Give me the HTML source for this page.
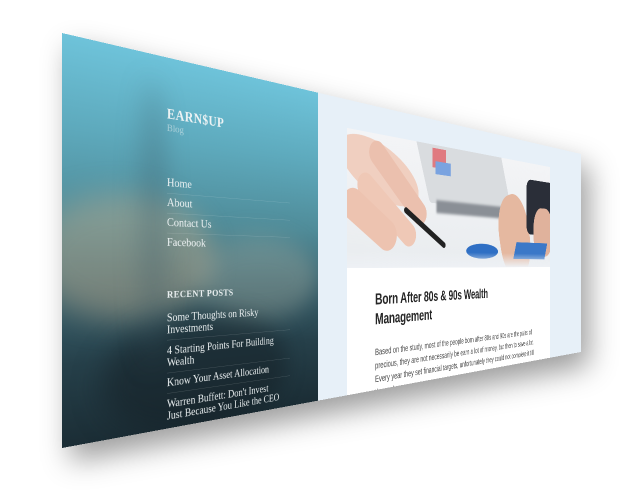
<!DOCTYPE html>
<html><head><meta charset="utf-8"><style>
html,body{margin:0;padding:0;width:640px;height:490px;overflow:hidden;background:#fff;}
#wrap{position:absolute;left:0;top:0;width:640px;height:490px;filter:drop-shadow(8px 14px 14px rgba(0,0,0,.38));}
#pg{position:absolute;left:0;top:0;width:2160px;height:800px;transform-origin:0 0;
transform:matrix3d(0.53507,0.13416,0,0.00050739, 0,0.51875,0,0, 0,0,1,0, 62,33,0,1);overflow:hidden;background:#e7f0f8;}
#side{position:absolute;left:0;top:0;width:685px;height:800px;overflow:hidden;
background:linear-gradient(180deg,#6ec3da 0%,#5eaabd 22%,#4f8b98 45%,#3b6470 62%,#26404a 80%,#1b2d35 100%);}
.blob{position:absolute;border-radius:50%;filter:blur(30px);}
.s{position:absolute;font-family:"Liberation Serif",serif;color:#eef3f4;white-space:nowrap;}
.sep{position:absolute;left:233px;width:355px;height:1px;background:rgba(255,255,255,.18);}
#card{position:absolute;left:794px;top:77px;width:1111px;height:760px;background:#fff;overflow:hidden;}
#img{position:absolute;left:0;top:0;width:1111px;height:379px;background:linear-gradient(180deg,#f3f4f6,#e9ecef);overflow:hidden;}
.t{position:absolute;font-family:"Liberation Sans",sans-serif;color:#222;white-space:nowrap;}
</style></head><body>
<div id="wrap"><div id="pg">
 <div id="side">
  <div class="blob" style="left:-60px;top:300px;width:420px;height:260px;background:rgba(190,170,140,.45)"></div>
  <div class="blob" style="left:300px;top:380px;width:380px;height:200px;background:rgba(170,175,160,.35)"></div>
  <div class="blob" style="left:80px;top:560px;width:500px;height:260px;background:rgba(20,30,35,.5)"></div>
  <div class="blob" style="left:170px;top:60px;width:60px;height:600px;background:rgba(60,90,100,.35)"></div>
  <div class="s" style="left:233px;top:103px;font-size:31px;font-weight:bold;letter-spacing:1px">EARN$UP</div>
  <div class="s" style="left:233px;top:138px;font-size:22px;opacity:.55">Blog</div>
  <div class="s" style="left:233px;top:254px;font-size:26px">Home</div>
  <div class="sep" style="top:292px"></div>
  <div class="s" style="left:233px;top:297px;font-size:26px">About</div>
  <div class="sep" style="top:335px"></div>
  <div class="s" style="left:233px;top:340px;font-size:26px">Contact Us</div>
  <div class="sep" style="top:378px"></div>
  <div class="s" style="left:233px;top:383px;font-size:26px">Facebook</div>
  <div class="s" style="left:233px;top:498px;font-size:22px;font-weight:bold;letter-spacing:1px">RECENT POSTS</div>
  <div class="s" style="left:233px;top:549px;font-size:25px;line-height:26px">Some Thoughts on Risky<br>Investments</div>
  <div class="sep" style="top:609px"></div>
  <div class="s" style="left:233px;top:620px;font-size:25px;line-height:26px">4 Starting Points For Building<br>Wealth</div>
  <div class="sep" style="top:680px"></div>
  <div class="s" style="left:233px;top:689px;font-size:25px;line-height:26px">Know Your Asset Allocation</div>
  <div class="sep" style="top:724px"></div>
  <div class="s" style="left:233px;top:735px;font-size:25px;line-height:26px">Warren Buffett: Don't Invest<br>Just Because You Like the CEO</div>
 </div>
 <div id="card">
  <div id="img">
   <div style="position:absolute;left:330px;top:-20px;width:470px;height:200px;background:#d9dcdf;border-radius:10px;transform:skewX(20deg)"></div>
   <div style="position:absolute;left:380px;top:10px;width:70px;height:60px;background:#e07a80"></div>
   <div style="position:absolute;left:395px;top:50px;width:80px;height:40px;background:#7aa3e0"></div>
   <div style="position:absolute;left:400px;top:170px;width:420px;height:40px;background:#8a8f96;filter:blur(4px)"></div>
   <div style="position:absolute;left:-40px;top:30px;width:360px;height:150px;background:#f0cfc0;border-radius:50%;transform:rotate(20deg)"></div>
   <div style="position:absolute;left:60px;top:100px;width:320px;height:70px;background:#ebc0ae;border-radius:40px;transform:rotate(40deg)"></div>
   <div style="position:absolute;left:20px;top:180px;width:300px;height:70px;background:#efc8b6;border-radius:40px;transform:rotate(35deg)"></div>
   <div style="position:absolute;left:-30px;top:200px;width:250px;height:90px;background:#edc3b0;border-radius:45px;transform:rotate(30deg)"></div>
   <div style="position:absolute;left:230px;top:250px;width:230px;height:18px;background:#222;border-radius:9px;transform:rotate(28deg)"></div>
   <div style="position:absolute;left:760px;top:120px;width:200px;height:300px;background:#e5b8a0;border-radius:45%;transform:rotate(-15deg)"></div>
   <div style="position:absolute;left:940px;top:60px;width:200px;height:200px;background:#2a2e38;border-radius:30px"></div>
   <div style="position:absolute;left:990px;top:160px;width:140px;height:180px;background:#e0b29c;border-radius:40%"></div>
   <div style="position:absolute;left:560px;top:300px;width:190px;height:50px;background:#2f6fc4;border-radius:50%"></div>
   <div style="position:absolute;left:860px;top:290px;width:220px;height:60px;background:#3b78c8;transform:skewX(-20deg)"></div>
   <div style="position:absolute;left:0;top:330px;width:1111px;height:49px;background:linear-gradient(180deg,rgba(240,242,246,0),#eef1f5)"></div>
  </div>
  <div class="t" style="left:114px;top:440px;font-size:44px;line-height:56px;font-weight:bold;color:#262626;letter-spacing:-0.5px">Born After 80s &amp; 90s Wealth<br>Management</div>
  <div class="t" style="left:114px;top:598px;font-size:25px;line-height:38px;color:#444">Based on the study, most of the people born after 80s and 90s are the pairs of<br>precious, they are not necessarily be earn a lot of money, but then to save a lot.<br>Every year they set financial targets, unfortunately they could not complete it till<br>the end.</div>
 </div>
</div></div>
</body></html>
